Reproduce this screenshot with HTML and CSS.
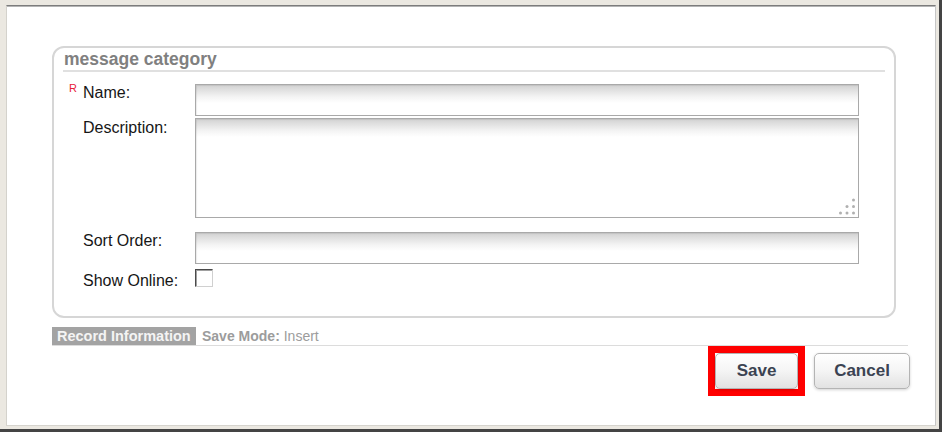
FILE: index.html
```html
<!DOCTYPE html>
<html lang="en">
<head>
  <meta charset="UTF-8">
  <meta name="viewport" content="width=device-width, initial-scale=1.0">
  <title>Message Category</title>
  <link rel="stylesheet" href="styles.css">
</head>
<body>
  <div class="window">
    <div class="pane">
      <div class="panel">
        <div class="panel-title">message category</div>
        <div class="form">
          <div class="row row-name">
            <label class="label"><span class="req">R</span>Name:</label>
            <input class="field" type="text">
          </div>
          <div class="row row-desc">
            <label class="label">Description:</label>
            <div class="area-wrap">
              <textarea class="field area"></textarea>
              <svg class="grip" width="17" height="17" viewBox="0 0 17 17">
                <circle cx="14.5" cy="2" r="1.5" fill="#b0b0b0"/>
                <circle cx="8" cy="8.5" r="1.5" fill="#b0b0b0"/>
                <circle cx="14.5" cy="8.5" r="1.5" fill="#b0b0b0"/>
                <circle cx="1.5" cy="15" r="1.5" fill="#b0b0b0"/>
                <circle cx="8" cy="15" r="1.5" fill="#b0b0b0"/>
                <circle cx="14.5" cy="15" r="1.5" fill="#b0b0b0"/>
              </svg>
            </div>
          </div>
          <div class="row row-sort">
            <label class="label">Sort Order:</label>
            <input class="field" type="text">
          </div>
          <div class="row row-online">
            <label class="label">Show Online:</label>
            <span class="check"></span>
          </div>
        </div>
      </div>

      <div class="record">
        <span class="record-tab">Record Information</span>
        <span class="record-mode"><b>Save Mode:</b> Insert</span>
      </div>

      <div class="actions">
        <span class="highlight"><button class="btn btn-save">Save</button></span>
        <button class="btn btn-cancel">Cancel</button>
      </div>
    </div>
  </div>
</body>
</html>
```

FILE: styles.css
```css
* {
  box-sizing: border-box;
  margin: 0;
  padding: 0;
}

html, body {
  width: 942px;
  height: 432px;
  overflow: hidden;
  background: #ebe8e1;
}

body {
  font-family: 'Liberation Sans', Arial, sans-serif;
  color: #1c1c1c;
}

.window {
  width: 942px;
  height: 432px;
  background: #ebe8e1;
  border-right: 3px solid #444;
  border-bottom: 3px solid #444;
  padding: 5px 3px 3px 6px;
}

.pane {
  height: 100%;
  background: #fff;
  border-top: 1px solid #7c7c7c;
  border-left: 1px solid #d4d2cc;
  border-right: 1px solid #c6c6c6;
  border-bottom: 1px solid #d6d4ce;
  box-shadow: inset 0 1px 0 #b4b4b4;
  padding-top: 40px;
}

.panel {
  width: 844px;
  height: 272px;
  margin-left: 45px;
  border: 2px solid #d6d6d6;
  border-radius: 12px;
}

.panel-title {
  margin: 0 9px;
  height: 24px;
  line-height: 22px;
  padding-left: 1px;
  font-size: 17.5px;
  font-weight: bold;
  color: #808080;
  border-bottom: 2px solid #e0e0e0;
}

.form {
  padding: 12px 0 0 29px;
}

.row {
  display: flex;
  align-items: flex-start;
}

.label {
  position: relative;
  width: 112px;
  font-size: 16px;
  line-height: 18px;
  color: #161616;
}

.req {
  position: absolute;
  left: -14px;
  top: -5px;
  font-size: 11px;
  color: #e8203a;
}

.field {
  display: block;
  width: 664px;
  height: 32px;
  border: 1px solid #a9a9a9;
  background: linear-gradient(to bottom, #d2d2d2 0, #f4f4f4 12px, #fff 18px);
  box-shadow: inset 1px 1px 1px rgba(0, 0, 0, 0.08);
  font-family: inherit;
  font-size: 14px;
  outline: none;
}

.row-desc {
  margin-top: 2px;
}

.row-desc .label {
  padding-top: 1px;
}

.area-wrap {
  position: relative;
}

.area {
  height: 100px;
  resize: none;
}

.grip {
  position: absolute;
  right: 3px;
  bottom: 3px;
}

.row-sort {
  margin-top: 14px;
}

.row-online {
  margin-top: 5px;
}

.row-online .label {
  padding-top: 3px;
}

.check {
  display: block;
  width: 18px;
  height: 18px;
  border: 1px solid;
  border-color: #4a4a4a #d0d0d0 #d0d0d0 #4a4a4a;
  box-shadow: inset 1px 1px 0 #a0a0a0;
  background: #fff;
}

.record {
  display: flex;
  align-items: stretch;
  width: 856px;
  height: 19px;
  margin: 9px 0 0 45px;
  border-bottom: 1px solid #dcdcdc;
}

.record-tab {
  width: 144px;
  background: #a3a3a3;
  color: #f4f4f4;
  font-size: 14.5px;
  font-weight: bold;
  line-height: 18px;
  padding-left: 5px;
}

.record-mode {
  padding-left: 6px;
  font-size: 14px;
  line-height: 19px;
  color: #9c9c9c;
}

.actions {
  display: flex;
  justify-content: flex-end;
  align-items: flex-start;
  padding-right: 25px;
  gap: 9px;
}

.highlight {
  display: flex;
  border: 7px solid #f00;
}

.btn {
  height: 36px;
  border: 1px solid #b4b4b4;
  border-radius: 5px;
  background: linear-gradient(to bottom, #fff 0, #f6f6f6 45%, #e2e2e2 100%);
  box-shadow: 0 1px 3px rgba(0, 0, 0, 0.18);
  font-family: 'Liberation Sans', Arial, sans-serif;
  font-size: 17px;
  font-weight: bold;
  color: #3b4352;
  cursor: pointer;
}

.btn-save {
  width: 83px;
}

.btn-cancel {
  width: 96px;
  margin-top: 7px;
}
```
